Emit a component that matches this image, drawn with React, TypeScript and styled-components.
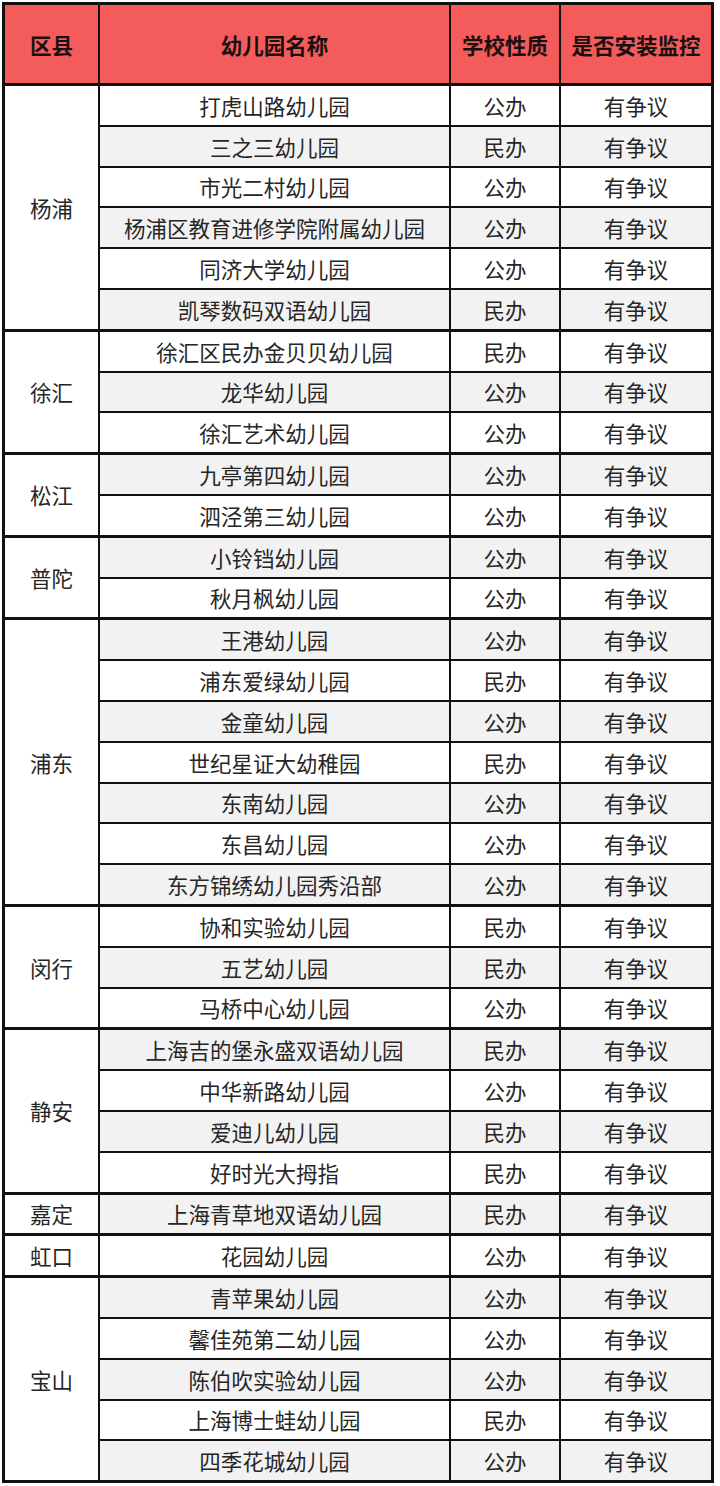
import React from "react";
import styled, { createGlobalStyle } from "styled-components";

type School = { name: string; kind: string };
type District = { name: string; schools: School[] };

const data: District[] = [
  {
    name: "杨浦",
    schools: [
      { name: "打虎山路幼儿园", kind: "公办" },
      { name: "三之三幼儿园", kind: "民办" },
      { name: "市光二村幼儿园", kind: "公办" },
      { name: "杨浦区教育进修学院附属幼儿园", kind: "公办" },
      { name: "同济大学幼儿园", kind: "公办" },
      { name: "凯琴数码双语幼儿园", kind: "民办" },
    ],
  },
  {
    name: "徐汇",
    schools: [
      { name: "徐汇区民办金贝贝幼儿园", kind: "民办" },
      { name: "龙华幼儿园", kind: "公办" },
      { name: "徐汇艺术幼儿园", kind: "公办" },
    ],
  },
  {
    name: "松江",
    schools: [
      { name: "九亭第四幼儿园", kind: "公办" },
      { name: "泗泾第三幼儿园", kind: "公办" },
    ],
  },
  {
    name: "普陀",
    schools: [
      { name: "小铃铛幼儿园", kind: "公办" },
      { name: "秋月枫幼儿园", kind: "公办" },
    ],
  },
  {
    name: "浦东",
    schools: [
      { name: "王港幼儿园", kind: "公办" },
      { name: "浦东爱绿幼儿园", kind: "民办" },
      { name: "金童幼儿园", kind: "公办" },
      { name: "世纪星证大幼稚园", kind: "民办" },
      { name: "东南幼儿园", kind: "公办" },
      { name: "东昌幼儿园", kind: "公办" },
      { name: "东方锦绣幼儿园秀沿部", kind: "公办" },
    ],
  },
  {
    name: "闵行",
    schools: [
      { name: "协和实验幼儿园", kind: "民办" },
      { name: "五艺幼儿园", kind: "民办" },
      { name: "马桥中心幼儿园", kind: "公办" },
    ],
  },
  {
    name: "静安",
    schools: [
      { name: "上海吉的堡永盛双语幼儿园", kind: "民办" },
      { name: "中华新路幼儿园", kind: "公办" },
      { name: "爱迪儿幼儿园", kind: "民办" },
      { name: "好时光大拇指", kind: "民办" },
    ],
  },
  {
    name: "嘉定",
    schools: [{ name: "上海青草地双语幼儿园", kind: "民办" }],
  },
  {
    name: "虹口",
    schools: [{ name: "花园幼儿园", kind: "公办" }],
  },
  {
    name: "宝山",
    schools: [
      { name: "青苹果幼儿园", kind: "公办" },
      { name: "馨佳苑第二幼儿园", kind: "公办" },
      { name: "陈伯吹实验幼儿园", kind: "公办" },
      { name: "上海博士蛙幼儿园", kind: "民办" },
      { name: "四季花城幼儿园", kind: "公办" },
    ],
  },
];

const GlobalStyle = createGlobalStyle`
  html, body {
    margin: 0;
    padding: 0;
    background: #ffffff;
  }
  body {
    font-family: "Noto Sans CJK SC", "Noto Sans", sans-serif;
    color: #222;
  }
`;

const Page = styled.div`
  padding: 2px 0 0 2px;
  width: 720px;
  box-sizing: border-box;
`;

const Table = styled.table`
  border-collapse: collapse;
  table-layout: fixed;
  width: 710px;
  border: 3px solid #111;
`;

const HeadCell = styled.th<{ $w: number }>`
  width: ${(p) => p.$w}px;
  height: 78px;
  padding: 0;
  background: #f45b5b;
  border: 2px solid #111;
  font-size: 21.5px;
  font-weight: 700;
  color: #1a1010;
  text-align: center;
  vertical-align: middle;
  white-space: nowrap;
`;

const Row = styled.tr<{ $groupStart: boolean }>`
  border-top: ${(p) => (p.$groupStart ? "3px" : "2px")} solid #111;
`;

const DistrictCell = styled.td`
  background: #ffffff;
  border: 2px solid #111;
  border-top-width: 3px;
  border-bottom-width: 3px;
  font-size: 21.5px;
  text-align: center;
  vertical-align: middle;
  padding: 0;
  color: #262626;
`;

const Cell = styled.td<{ $shade: boolean }>`
  height: 38.8px;
  padding: 0;
  background: ${(p) => (p.$shade ? "#f2f2f2" : "#ffffff")};
  border-left: 2px solid #111;
  border-right: 2px solid #111;
  font-size: 21.5px;
  text-align: center;
  vertical-align: middle;
  white-space: nowrap;
  color: #262626;
`;

export default function App() {
  let index = 0;
  return (
    <Page>
      <GlobalStyle />
      <Table>
        <thead>
          <tr>
            <HeadCell $w={93}>区县</HeadCell>
            <HeadCell $w={349}>幼儿园名称</HeadCell>
            <HeadCell $w={108}>学校性质</HeadCell>
            <HeadCell $w={150}>是否安装监控</HeadCell>
          </tr>
        </thead>
        <tbody>
          {data.map((district) =>
            district.schools.map((school, i) => {
              const shade = index % 2 === 1;
              index++;
              return (
                <Row key={district.name + school.name} $groupStart={i === 0}>
                  {i === 0 && (
                    <DistrictCell rowSpan={district.schools.length}>
                      {district.name}
                    </DistrictCell>
                  )}
                  <Cell $shade={shade}>{school.name}</Cell>
                  <Cell $shade={shade}>{school.kind}</Cell>
                  <Cell $shade={shade}>有争议</Cell>
                </Row>
              );
            })
          )}
        </tbody>
      </Table>
    </Page>
  );
}
